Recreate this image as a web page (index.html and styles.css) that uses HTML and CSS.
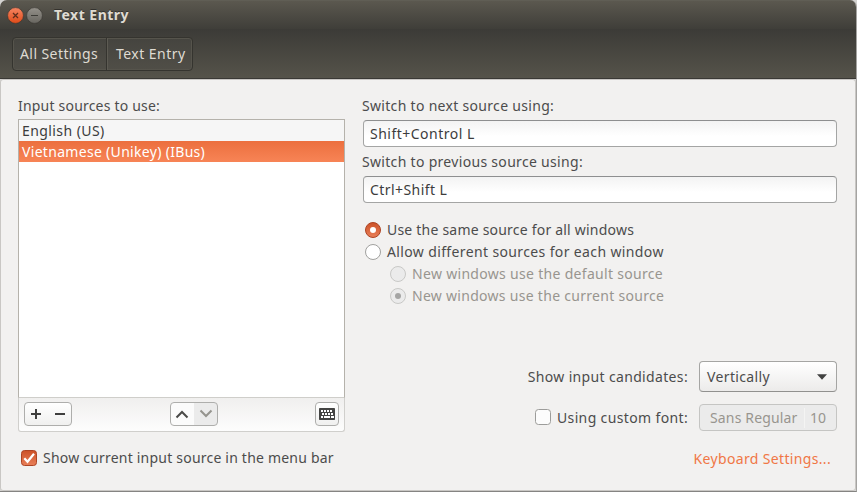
FILE: index.html
```html
<!DOCTYPE html>
<html lang="en">
<head>
<meta charset="utf-8">
<title>Text Entry</title>
<link rel="stylesheet" href="styles.css">
</head>
<body>
<div class="window">
  <header class="titlebar">
    <svg class="controls" width="38" height="18" viewBox="0 0 38 18">
      <defs>
        <linearGradient id="close" x2="0" y2="1"><stop offset="0" stop-color="#f68562"/><stop offset="1" stop-color="#df4b18"/></linearGradient>
        <linearGradient id="min" x2="0" y2="1"><stop offset="0" stop-color="#94918a"/><stop offset="1" stop-color="#686660"/></linearGradient>
      </defs>
      <circle cx="9.5" cy="8.5" r="7.9" fill="url(#close)" stroke="#35342f" stroke-width=".6"/>
      <path d="M7 6l5 5M12 6l-5 5" stroke="#5e2d1c" stroke-width="1.3"/>
      <circle cx="28.5" cy="8.5" r="7.9" fill="url(#min)" stroke="#35342f" stroke-width=".6"/>
      <path d="M25 8.5h7" stroke="#3d3c37" stroke-width="1.2"/>
    </svg>
    <h1 class="ls47">Text Entry</h1>
  </header>
  <nav class="toolbar">
    <div class="crumbs">
      <span class="crumb crumb-first ls42">All Settings</span>
      <span class="crumb ls47">Text Entry</span>
    </div>
  </nav>
  <main class="content">
    <section class="left">
      <div class="label ls25">Input sources to use:</div>
      <div class="list">
        <div class="row ls42">English (US)</div>
        <div class="row selected ls31">Vietnamese (Unikey) (IBus)</div>
      </div>
      <div class="listbar">
        <div class="btn pair">
          <svg width="48" height="24" viewBox="0 0 48 24"><path d="M7 12h10M12 7v10M31 12h10" stroke="#3f3f3e" stroke-width="2" fill="none"/></svg>
        </div>
        <div class="btn pair move">
          <svg width="48" height="24" viewBox="0 0 48 24"><path d="M6.500 15.500L12 10l5.500 5.500" stroke="#4a4a48" stroke-width="2" fill="none"/><path d="M30.500 8.500L36 14 41.500 8.500" stroke="#95948e" stroke-width="2" fill="none"/></svg>
        </div>
        <div class="btn keyboard">
          <svg width="24" height="24" viewBox="0 0 24 24"><rect x="4" y="6" width="16" height="12" rx=".7" fill="#444443"/><path d="M6 9h2m1 0h2m1 0h2m1 0h2M7 12h2m1 0h2m1 0h2m1 0h2M6 15h2m1 0h6m1 0h3" stroke="#fff" stroke-width="2"/></svg>
        </div>
      </div>
      <div class="option show">
        <svg class="mark" width="16" height="16" viewBox="0 0 16 16">
          <defs><linearGradient id="orange" x2="0" y2="1"><stop offset="0" stop-color="#cc5127"/><stop offset="1" stop-color="#e98059"/></linearGradient></defs>
          <rect x=".5" y=".5" width="15" height="15" rx="3" fill="url(#orange)" stroke="#ad4424"/>
          <path d="M3.300 8.200l3.200 3.500 6.500-8" fill="none" stroke="#fff" stroke-width="2.200"/>
        </svg>
        <span class="ls21">Show current input source in the menu bar</span>
      </div>
    </section>
    <section class="right">
      <div class="label ls31">Switch to next source using:</div>
      <div class="entry ls49">Shift+Control L</div>
      <div class="label second ls31">Switch to previous source using:</div>
      <div class="entry ls43">Ctrl+Shift L</div>
      <div class="radios">
        <div class="option">
          <svg class="mark" width="16" height="16" viewBox="0 0 16 16"><circle cx="8" cy="8" r="7.500" fill="url(#orange)" stroke="#ad4424"/><circle cx="8" cy="8" r="3" fill="#fff"/></svg>
          <span class="ls21">Use the same source for all windows</span>
        </div>
        <div class="option">
          <svg class="mark" width="16" height="16" viewBox="0 0 16 16"><circle cx="8" cy="8" r="7.500" fill="#fff" stroke="#a0a09e"/></svg>
          <span class="ls37">Allow different sources for each window</span>
        </div>
        <div class="option sub">
          <svg class="mark" width="16" height="16" viewBox="0 0 16 16"><circle cx="8" cy="8" r="7.500" fill="#ebebeb" stroke="#c8c8c6"/></svg>
          <span class="ls31">New windows use the default source</span>
        </div>
        <div class="option sub">
          <svg class="mark" width="16" height="16" viewBox="0 0 16 16"><circle cx="8" cy="8" r="7.500" fill="#ebebeb" stroke="#c8c8c6"/><circle cx="8" cy="8" r="3" fill="#a5a5a4"/></svg>
          <span class="ls29">New windows use the current source</span>
        </div>
      </div>
      <div class="field candidates">
        <span class="ls34">Show input candidates:</span>
        <div class="combo"><span class="ls36">Vertically</span>
          <svg width="12" height="6" viewBox="0 0 12 6"><path d="M1 .3h10L6 5.700z" fill="#414140"/></svg>
        </div>
      </div>
      <div class="field font">
        <svg class="box" width="16" height="16" viewBox="0 0 16 16"><rect x=".5" y=".5" width="15" height="15" rx="3" fill="#fcfcfc" stroke="#9c9c9a"/></svg>
        <span class="ls36 custom">Using custom font:</span>
        <div class="fontbtn"><span class="family ls15">Sans Regular</span><span class="size">10</span></div>
      </div>
      <a class="link ls34">Keyboard Settings...</a>
    </section>
  </main>
</div>
</body>
</html>
```
FILE: styles.css
```css
* { box-sizing: border-box; }
body {
  margin: 0;
  background: #d4d3d1;
  font: 14px/20px "Noto Sans", sans-serif;
  color: #4c4c4c;
}
svg { display: block; flex: none; }
span, .label, .row, .entry, .link, h1 { white-space: nowrap; }

.window {
  width: 857px;
  height: 492px;
  display: flex;
  flex-direction: column;
  border-right: 1px solid #a5a4a2;
  border-bottom: 1px solid #858482;
  border-radius: 7px 7px 0 0;
  overflow: hidden;
}
.titlebar {
  flex: none;
  height: 29px;
  display: flex;
  align-items: center;
  padding: 0 6px;
  background: linear-gradient(#5b584f, #3f3e39);
  border-top: 1px solid #605e55;
}
.controls { margin-top: 1px; }
h1 {
  margin: 0 0 0 10px;
  font-size: 14px;
  line-height: 20px;
  color: #dfdbd2;
  text-shadow: 0 -1px #33322e;
}
.toolbar {
  flex: none;
  height: 50px;
  padding: 8px 12px;
  background: linear-gradient(#3c3b37, #55534a);
  border-bottom: 1px solid #3a3935;
}
.crumbs {
  display: flex;
  width: 181px;
  height: 34px;
  border: 1px solid #35342f;
  border-radius: 4px;
  background: linear-gradient(#45443f, #504e47);
  box-shadow: inset 0 0 0 1px #56544c;
  color: #dfdbd2;
}
.crumb {
  flex: 1;
  padding: 6px 0 0 9px;
}
.crumb-first {
  flex: 0 0 94px;
  padding-left: 7px;
  border-right: 1px solid #35342f;
  box-shadow: 1px 0 #5d5b53;
}

.content {
  flex: 1;
  display: grid;
  grid-template-columns: 327px 475px;
  column-gap: 17px;
  padding: 16px 18px 0 17px;
  background: #f2f1f0;
  border: 1px solid #c9c7c4;
  border-radius: 3px;
  align-items: start;
}
.left, .right { display: flex; flex-direction: column; }
.label { height: 23px; line-height: 20px; }
.list {
  height: 279px;
  background: #fff;
  border: 1px solid #b5b2ab;
  border-bottom-color: #cfceca;
}
.left .label { letter-spacing: .2px; }
.row {
  height: 21px;
  padding-left: 3px;
  line-height: 21px;
  background: #f6f6f6;
  color: #3c3c3c;
}
.row.selected {
  background: linear-gradient(#ec6f3e, #f78456);
  color: #fff;
}
.listbar {
  height: 34px;
  display: flex;
  justify-content: space-between;
  padding: 4px 5px;
  border: 1px solid #d0cfcc;
  border-top: 0;
  border-radius: 0 0 3px 3px;
  background: linear-gradient(#f0efee, #fdfdfd);
}
.btn {
  height: 24px;
  border: 1px solid #aeaeac;
  border-radius: 4px;
  background: linear-gradient(#fff, #f0f0ef);
}
.btn svg { margin: -1px; }
.pair { width: 48px; }
.move {
  margin-left: 74px;
  margin-right: 73px;
  background: linear-gradient(90deg, #fbfbfb 50%, #ebebeb 50%);
}
.keyboard { width: 24px; }

.option {
  display: flex;
  align-items: center;
  height: 22px;
  gap: 6px;
}
.show { margin: 15px 0 0 3px; }

.entry {
  height: 27px;
  margin-left: 1px;
  padding: 3px 0 0 6px;
  border: 1px solid #a4a5a4;
  border-top-color: #8e8f90;
  border-radius: 4px;
  background: linear-gradient(#f3f3f3, #fff 60%);
  color: #3c3c3c;
}
.right .label { height: 24px; }
.right .label.second { margin-top: 5px; }
.radios { margin: 16px 0 0 3px; }
.sub { margin-left: 25px; color: #98958f; }

.field { display: flex; justify-content: flex-end; align-items: center; }
.candidates { margin-top: 54px; gap: 11px; }
.combo {
  width: 138px;
  height: 31px;
  display: flex;
  align-items: center;
  justify-content: space-between;
  padding: 0 8px 0 7px;
  border: 1px solid #a5a5a3;
  border-bottom-color: #91918f;
  border-radius: 4px;
  background: linear-gradient(#fff, #ecebea);
}
.font { margin-top: 12px; gap: 6px; }
.custom { padding-top: 1px; }
.box { margin-bottom: 1px; }
.fontbtn {
  width: 138px;
  height: 27px;
  margin-left: 5px;
  display: flex;
  align-items: center;
  padding: 1px 0 0 10px;
  border: 1px solid #c5c5c3;
  border-radius: 4px;
  background: #ebebeb;
  color: #98958f;
}
.family { width: 94px; }
.size {
  padding-left: 5px;
  border-left: 1px solid #f4f4f3;
}
.link {
  align-self: flex-end;
  margin: 18px 6px 0 0;
  color: #f07746;
}

.ls15 { letter-spacing: .15px; }
.ls21 { letter-spacing: .21px; }
.ls29 { letter-spacing: .29px; }
.ls31 { letter-spacing: .31px; }
.ls34 { letter-spacing: .34px; }
.ls36 { letter-spacing: .36px; }
.ls37 { letter-spacing: .37px; }
.ls42 { letter-spacing: .42px; }
.ls43 { letter-spacing: .43px; }
.ls47 { letter-spacing: .47px; }
.ls49 { letter-spacing: .49px; }
```
